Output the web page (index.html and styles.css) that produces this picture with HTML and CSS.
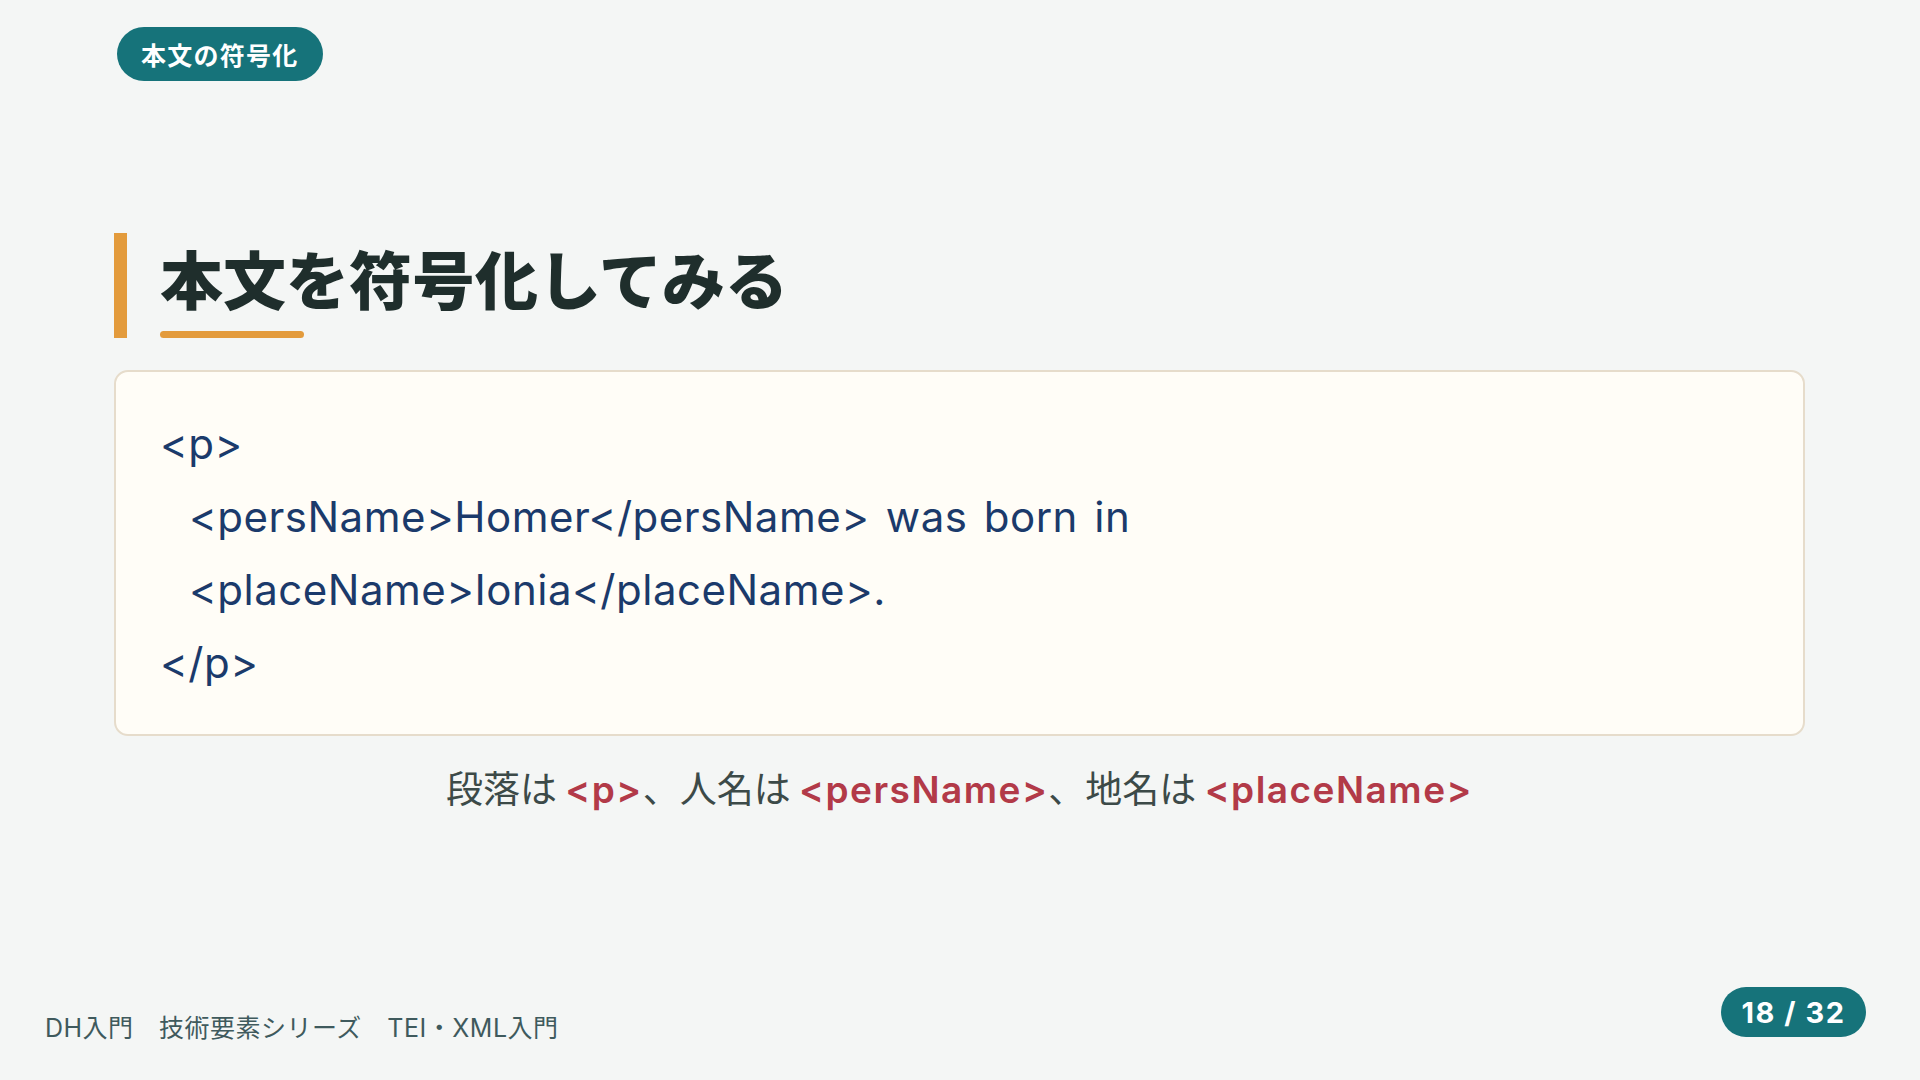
FILE: index.html
```html
<!DOCTYPE html>
<html lang="ja">
<head>
<meta charset="utf-8">
<title>本文を符号化してみる</title>
<link rel="stylesheet" href="styles.css">
</head>
<body>
<div class="slide">
  <main class="content">
    <div class="section-badge">本文の符号化</div>
    <div class="title">
      <h1 class="title-text">本文を符号化してみる</h1>
      <div class="title-underline"></div>
    </div>
    <div class="code-box">
      <div class="code-line">&lt;p&gt;</div>
      <div class="code-line indent">&lt;persName&gt;Homer&lt;/persName&gt; was born in</div>
      <div class="code-line indent">&lt;placeName&gt;Ionia&lt;/placeName&gt;.</div>
      <div class="code-line">&lt;/p&gt;</div>
    </div>
    <p class="caption">段落は <span class="tag">&lt;p&gt;</span>、人名は <span class="tag">&lt;persName&gt;</span>、地名は <span class="tag">&lt;placeName&gt;</span></p>
  </main>
  <footer class="footer">
    <div class="footer-text">DH入門　技術要素シリーズ　TEI・XML入門</div>
    <div class="page-badge">18 / 32</div>
  </footer>
</div>
</body>
</html>
```
FILE: styles.css
```css
* { box-sizing: border-box; }
html, body { margin: 0; padding: 0; }
body {
  background: #f4f6f5;
  font-family: "Inter", "Noto Sans CJK JP", sans-serif;
}
.slide {
  width: 1920px;
  height: 1080px;
  display: flex;
  flex-direction: column;
}
.content {
  flex: 1;
  display: flex;
  flex-direction: column;
  padding: 27px 115px 0 114px;
}
.section-badge {
  align-self: flex-start;
  margin-left: 3px;
  height: 54px;
  padding: 0 24px;
  border-radius: 27px;
  background: #16737a;
  color: #ffffff;
  font-family: "Noto Sans CJK JP", sans-serif;
  font-weight: 700;
  font-size: 25px;
  letter-spacing: 0.05em;
  display: flex;
  align-items: center;
}
.title {
  margin-top: 152px;
  border-left: 13px solid #e39b3c;
  padding-left: 33px;
  height: 105px;
}
.title-text {
  margin: 4px 0 0 0;
  font-family: "Noto Sans CJK JP", sans-serif;
  font-weight: 900;
  font-size: 63px;
  line-height: 80px;
  letter-spacing: 0;
  color: #1f2e2c;
}
.title-underline {
  margin-top: 14px;
  width: 144px;
  height: 7px;
  border-radius: 4px;
  background: #e39b3c;
}
.code-box {
  margin-top: 32px;
  background: #fffdf7;
  border: 2px solid #e6dccb;
  border-radius: 14px;
  padding: 35px 44px;
  color: #1b3a6b;
  font-family: "Inter", "Noto Sans CJK JP", sans-serif;
  font-size: 42px;
  line-height: 73px;
  letter-spacing: 0.5px;
  word-spacing: 4px;
}
.code-line.indent { padding-left: 29px; }
.caption {
  margin: 24px 0 0 0;
  text-align: center;
  font-family: "Noto Sans CJK JP", sans-serif;
  font-size: 37px;
  line-height: 54px;
  color: #3c4a48;
}
.tag {
  font-family: "Inter", "Noto Sans CJK JP", sans-serif;
  font-weight: 600;
  letter-spacing: 1.5px;
  color: #b23a48;
}
.footer {
  display: flex;
  justify-content: space-between;
  align-items: flex-end;
  padding: 0 54px 34px 45px;
}
.footer-text {
  font-family: "Inter", "Noto Sans CJK JP", sans-serif;
  font-size: 25px;
  line-height: 36px;
  letter-spacing: 0.5px;
  color: #3f5a5d;
}
.page-badge {
  margin-bottom: 9px;
  height: 50px;
  width: 145px;
  border-radius: 25px;
  background: #16737a;
  color: #ffffff;
  font-family: "Inter", sans-serif;
  font-weight: 700;
  font-size: 29px;
  letter-spacing: 1.5px;
  display: flex;
  align-items: center;
  justify-content: center;
}
```
